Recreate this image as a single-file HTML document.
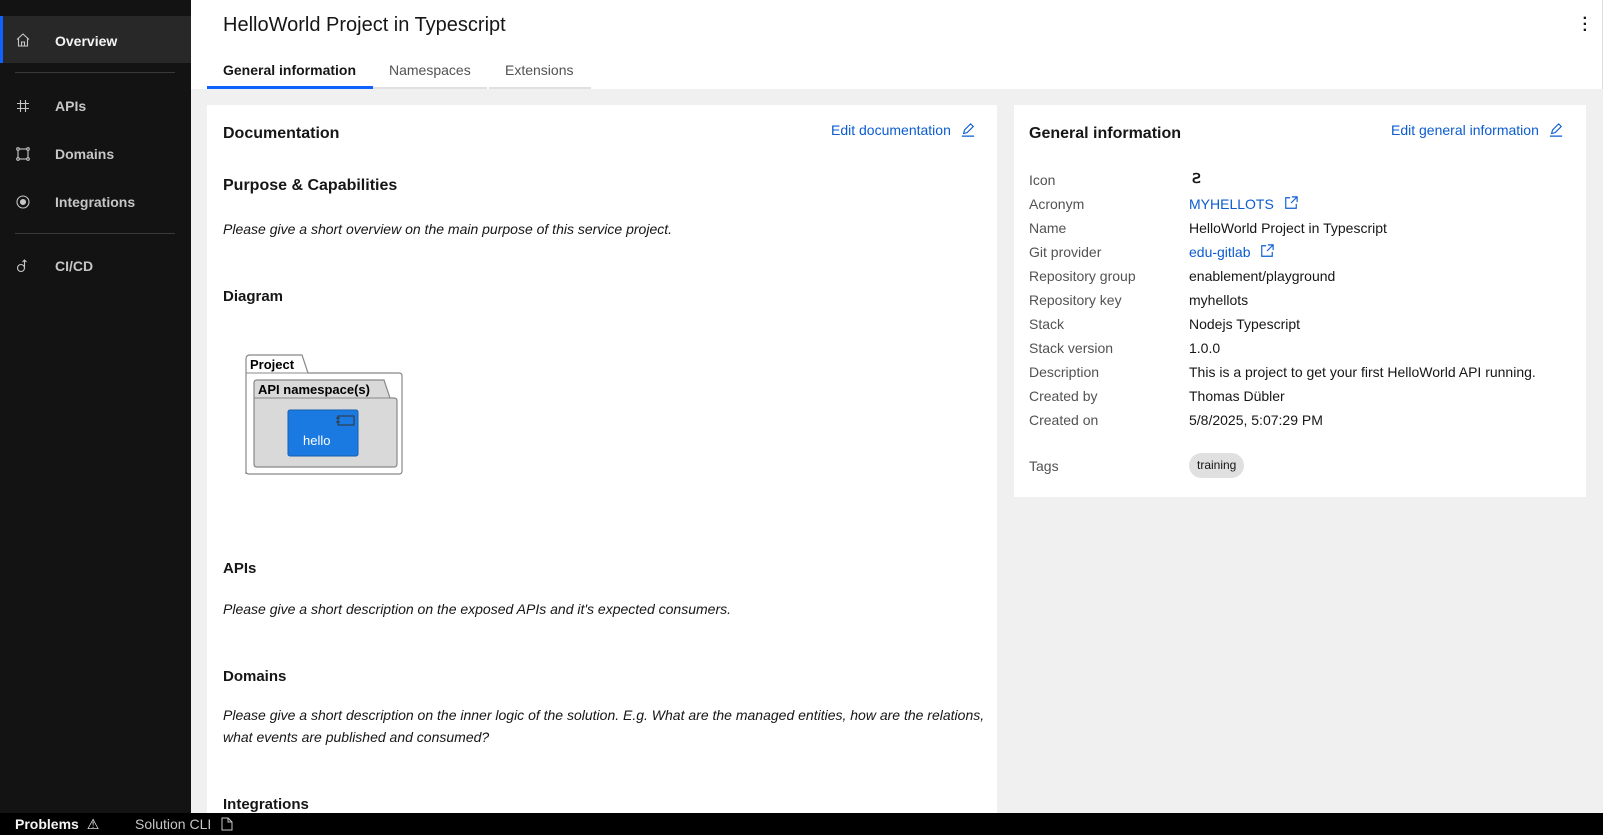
<!DOCTYPE html>
<html><head><meta charset="utf-8"><style>
*{margin:0;padding:0;box-sizing:border-box}
body{width:1603px;height:835px;overflow:hidden;background:#f0f0f0;font-family:"Liberation Sans",sans-serif;color:#161616;position:relative}
.a{position:absolute;white-space:nowrap}
#side{left:0;top:0;width:191px;height:813px;background:#131313}
.nav{left:0;width:191px;height:47px;color:#c6c6c6;font-size:14px;font-weight:bold}
.nav span{position:absolute;left:55px;top:15px}
.nav svg{position:absolute;left:15px;top:15px}
.sep{left:15px;width:160px;height:1px;background:#393939}
#hdr{left:191px;top:0;width:1412px;height:89px;background:#fff;border-right:1px solid #ddd}
.tab{top:62px;height:27px;font-size:14px;color:#525252;border-bottom:2px solid #e0e0e0;padding-left:16px}
.card{background:#fff}
h3{font-size:16px;font-weight:bold;position:absolute;white-space:nowrap}
.it{font-style:italic;font-size:14px;color:#161616}
.lbl{left:1029px;font-size:14px;color:#525252}
.val{left:1189px;font-size:14px;color:#161616}
.lnk{color:#0b5ccf}
</style></head><body>
<div class="a" id="side">
 <div class="a nav" style="top:16px;background:#282828;border-left:3px solid #0f62fe;color:#f4f4f4"><svg width="16" height="16" viewBox="0 0 16 16" fill="none" stroke="#c6c6c6" stroke-width="1.1" style="left:12px;top:16px"><path d="M2 7.5 8 2l6 5.5M3.5 6.5V14h9V6.5M6.5 14V10h3v4"/></svg><span style="left:52px;top:17px">Overview</span></div>
 <div class="a sep" style="top:72px"></div>
 <div class="a nav" style="top:83px"><svg width="16" height="16" viewBox="0 0 16 16" stroke="#c6c6c6" stroke-width="1.1"><path d="M5.5 2v12M10.5 2v12M2 5.5h12M2 10.5h12"/></svg><span>APIs</span></div>
 <div class="a nav" style="top:131px"><svg width="16" height="16" viewBox="0 0 16 16" fill="none" stroke="#c6c6c6" stroke-width="1.1"><rect x="3" y="3" width="10" height="10"/><circle cx="3" cy="3" r="1.3" fill="#131313"/><circle cx="13" cy="3" r="1.3" fill="#131313"/><circle cx="3" cy="13" r="1.3" fill="#131313"/><circle cx="13" cy="13" r="1.3" fill="#131313"/></svg><span>Domains</span></div>
 <div class="a nav" style="top:179px"><svg width="16" height="16" viewBox="0 0 16 16" fill="none" stroke="#c6c6c6" stroke-width="1.1"><circle cx="8" cy="8" r="6"/><circle cx="8" cy="8" r="2.5" fill="#c6c6c6"/></svg><span>Integrations</span></div>
 <div class="a sep" style="top:233px"></div>
 <div class="a nav" style="top:243px"><svg width="16" height="16" viewBox="0 0 16 16" fill="none" stroke="#c6c6c6" stroke-width="1.1"><circle cx="6" cy="10" r="3.5"/><path d="M9.5 10V2M7.5 4l2-2 2 2"/></svg><span>CI/CD</span></div>
</div>
<div class="a" id="hdr">
 <div class="a" style="left:32px;top:14px;font-size:20px;color:#161616">HelloWorld Project in Typescript</div>
 <div class="a" style="right:14px;top:16px;font-size:16px;font-weight:bold;line-height:6px;color:#161616">·<br>·<br>·</div>
 <div class="a tab" style="left:16px;width:166px;color:#161616;font-weight:bold;border-bottom:3px solid #0f62fe;padding-left:16px">General information</div>
 <div class="a tab" style="left:182px;width:114px">Namespaces</div>
 <div class="a tab" style="left:298px;width:102px">Extensions</div>
</div>
<div class="a card" style="left:207px;top:105px;width:790px;height:720px">
 <h3 style="left:16px;top:20px">Documentation</h3>
 <div class="a lnk" style="left:624px;top:17px;font-size:14px">Edit documentation <svg width="14" height="14" viewBox="0 0 16 16" fill="none" stroke="#0b5ccf" stroke-width="1.3" style="margin-left:6px;vertical-align:-2px"><path d="M1 15h14M3 12l1-4 7-7 3 3-7 7z"/></svg></div>
 <h3 style="left:16px;top:72px">Purpose &amp; Capabilities</h3>
 <div class="a it" style="left:16px;top:116px">Please give a short overview on the main purpose of this service project.</div>
 <h3 style="left:16px;top:183px;font-size:15px">Diagram</h3>
 <svg class="a" style="left:38px;top:247px" width="160" height="125" viewBox="0 0 160 125">
  <path d="M1 122V7q0-4 4-4h52l6 18h91q3 0 3 3v95q0 3-3 3H4q-3 0-3-3z" fill="#fff" stroke="#888" stroke-width="1.2"/>
  <path d="M1 21h62" stroke="#888"/>
  <text x="5" y="17" font-family="Liberation Sans" font-weight="bold" font-size="13">Project</text>
  <path d="M9 112V31q0-3 3-3h127l6 18h4q3 0 3 3v63q0 3-3 3H12q-3 0-3-3z" fill="#d9d9d9" stroke="#888" stroke-width="1.2"/>
  <path d="M9 46h136" stroke="#888"/>
  <text x="13" y="42" font-family="Liberation Sans" font-weight="bold" font-size="13">API namespace(s)</text>
  <rect x="43" y="58" width="70" height="46" rx="2" fill="#1a7ae2" stroke="#1560b0"/>
  <rect x="93" y="64" width="16" height="9" fill="none" stroke="#333"/>
  <path d="M91 66h4M91 70h4" stroke="#333"/>
  <text x="58" y="93" font-family="Liberation Sans" font-size="13" fill="#fff">hello</text>
 </svg>
 <h3 style="left:16px;top:455px;font-size:15px">APIs</h3>
 <div class="a it" style="left:16px;top:496px">Please give a short description on the exposed APIs and it's expected consumers.</div>
 <h3 style="left:16px;top:563px;font-size:15px">Domains</h3>
 <div class="a it" style="left:16px;top:602px">Please give a short description on the inner logic of the solution. E.g. What are the managed entities, how are the relations,</div>
 <div class="a it" style="left:16px;top:624px">what events are published and consumed?</div>
 <h3 style="left:16px;top:691px;font-size:15px">Integrations</h3>
</div>
<div class="a card" style="left:1014px;top:105px;width:572px;height:392px">
 <h3 style="left:15px;top:20px">General information</h3>
 <div class="a lnk" style="left:377px;top:17px;font-size:14px">Edit general information <svg width="14" height="14" viewBox="0 0 16 16" fill="none" stroke="#0b5ccf" stroke-width="1.3" style="margin-left:6px;vertical-align:-2px"><path d="M1 15h14M3 12l1-4 7-7 3 3-7 7z"/></svg></div>
</div>
<div class="a lbl" style="top:172px">Icon</div><div class="a val" style="top:170px;font-size:14px;font-weight:bold;left:1192px">Ꙅ</div>
<div class="a lbl" style="top:196px">Acronym</div><div class="a val lnk" style="top:196px">MYHELLOTS <svg width="14" height="14" viewBox="0 0 16 16" fill="none" stroke="#0b5ccf" stroke-width="1.3" style="margin-left:6px;vertical-align:-1px"><path d="M7 2H2v12h12V9M9 1h6v6M15 1 8 8"/></svg></div>
<div class="a lbl" style="top:220px">Name</div><div class="a val" style="top:220px">HelloWorld Project in Typescript</div>
<div class="a lbl" style="top:244px">Git provider</div><div class="a val lnk" style="top:244px">edu-gitlab <svg width="14" height="14" viewBox="0 0 16 16" fill="none" stroke="#0b5ccf" stroke-width="1.3" style="margin-left:6px;vertical-align:-1px"><path d="M7 2H2v12h12V9M9 1h6v6M15 1 8 8"/></svg></div>
<div class="a lbl" style="top:268px">Repository group</div><div class="a val" style="top:268px">enablement/playground</div>
<div class="a lbl" style="top:292px">Repository key</div><div class="a val" style="top:292px">myhellots</div>
<div class="a lbl" style="top:316px">Stack</div><div class="a val" style="top:316px">Nodejs Typescript</div>
<div class="a lbl" style="top:340px">Stack version</div><div class="a val" style="top:340px">1.0.0</div>
<div class="a lbl" style="top:364px">Description</div><div class="a val" style="top:364px">This is a project to get your first HelloWorld API running.</div>
<div class="a lbl" style="top:388px">Created by</div><div class="a val" style="top:388px">Thomas Dübler</div>
<div class="a lbl" style="top:412px">Created on</div><div class="a val" style="top:412px">5/8/2025, 5:07:29 PM</div>
<div class="a lbl" style="top:458px">Tags</div>
<div class="a" style="left:1189px;top:453px;height:25px;padding:0 8px;border-radius:13px;background:#e0e0e0;font-size:12px;line-height:25px;color:#161616">training</div>
<div class="a" style="left:0;top:813px;width:1603px;height:22px;background:#000;color:#f4f4f4;font-size:14px">
 <span class="a" style="left:15px;top:3px;font-weight:bold">Problems <span style="font-weight:normal;margin-left:4px">⚠</span></span>
 <span class="a" style="left:135px;top:3px;color:#c6c6c6">Solution CLI <svg width="12" height="14" viewBox="0 0 12 14" fill="none" stroke="#c6c6c6" style="margin-left:6px;vertical-align:-2px"><path d="M1 1h6l4 4v8H1zM7 1v4h4"/></svg></span>
</div>
</body></html>
